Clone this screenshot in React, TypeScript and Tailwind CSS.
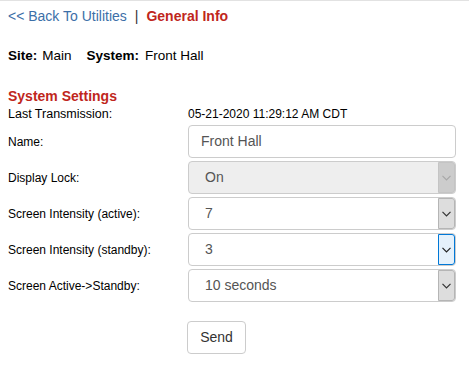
type Row = { label: string; value: string; kind: 'input' | 'select'; disabled?: boolean; focused?: boolean }

const ROWS: Row[] = [
  { label: 'Name:', value: 'Front Hall', kind: 'input' },
  { label: 'Display Lock:', value: 'On', kind: 'select', disabled: true },
  { label: 'Screen Intensity (active):', value: '7', kind: 'select' },
  { label: 'Screen Intensity (standby):', value: '3', kind: 'select', focused: true },
  { label: 'Screen Active->Standby:', value: '10 seconds', kind: 'select' },
]

function Caret() {
  return (
    <svg width="9" height="6" viewBox="0 0 9 6" fill="none" stroke="currentColor" strokeWidth="1.2">
      <polyline points="0.5,0.8 4.5,4.8 8.5,0.8" />
    </svg>
  )
}

function Field({ row }: { row: Row }) {
  if (row.kind === 'input') {
    return (
      <div className="h-[33px] w-[268px] rounded-[4px] border border-[#cccccc] bg-white flex items-center pl-[12px] text-[14px] text-[#555555]">
        {row.value}
      </div>
    )
  }
  const arrowCls = row.disabled
    ? 'bg-[#cccccc] border-[#c4c4c4] text-[#a8a8a8]'
    : row.focused
      ? 'bg-[#e5f1fb] border-[#0078d7] text-[#222222]'
      : 'bg-[#dddddd] border-[#b5b5b5] text-[#333333]'
  return (
    <div className={`h-[33px] w-[268px] rounded-[4px] border border-[#cccccc] flex items-stretch text-[14px] text-[#555555] ${row.disabled ? 'bg-[#eeeeee]' : 'bg-white'}`}>
      <div className="flex-1 flex items-center pl-[16px]">{row.value}</div>
      <div className={`w-[17px] border flex items-center justify-center rounded-r-[3px] ${arrowCls}`}>
        <Caret />
      </div>
    </div>
  )
}

export default function App() {
  return (
    <div className="min-h-[366px] w-[469px] bg-white border-t border-[#e2e2e2] px-2 pt-[5px] text-black" style={{ fontFamily: '"Liberation Sans", Arial, sans-serif' }}>
      <div className="h-5 flex items-center text-[14px]">
        <span className="text-[#3c6fa8]">&lt;&lt; Back To Utilities</span>
        <span className="text-[#333333] mx-[8px]">|</span>
        <span className="text-[#c0261c] font-bold">General Info</span>
      </div>
      <div className="mt-[22px] h-4 flex items-center text-[13.5px]">
        <span className="font-bold">Site:</span>
        <span className="ml-[5px]">Main</span>
        <span className="font-bold ml-[15px]">System:</span>
        <span className="ml-[6px]">Front Hall</span>
      </div>
      <div className="mt-[23px] h-[18px] flex items-center text-[14px] font-bold text-[#c0261c]">System Settings</div>
      <div className="mt-px h-4 flex items-center text-[12px]">
        <span className="w-[180px] text-[12.5px]">Last Transmission:</span>
        <span>05-21-2020 11:29:12 AM CDT</span>
      </div>
      <div className="mt-[3px] flex flex-col gap-[3px]">
        {ROWS.map(row => (
          <div key={row.label} className="flex items-center">
            <span className="w-[180px] text-[12px]">{row.label}</span>
            <Field row={row} />
          </div>
        ))}
      </div>
      <div className="mt-[19px] ml-[179px]">
        <button className="h-[33px] w-[59px] rounded-[4px] border border-[#cccccc] bg-white text-[14px] text-[#333333]">Send</button>
      </div>
    </div>
  )
}
